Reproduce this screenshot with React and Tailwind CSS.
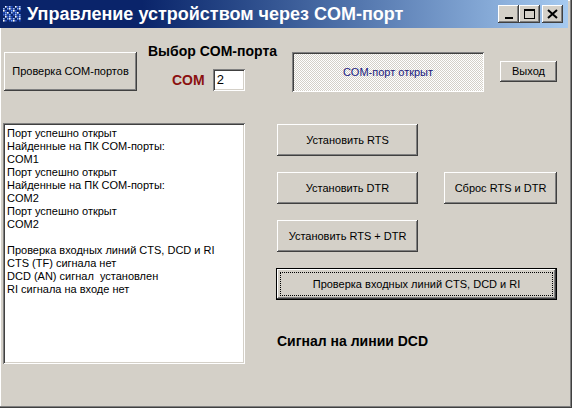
const btn =
  "flex items-center justify-center bg-[#d4d0c8] text-[11px] text-black shadow-[inset_-1px_-1px_#404040,inset_1px_1px_#ffffff,inset_-2px_-2px_#808080,inset_2px_2px_#d4d0c8]";

const lines = [
  "Порт успешно открыт",
  "Найденные на ПК COM-порты:",
  "COM1",
  "Порт успешно открыт",
  "Найденные на ПК COM-порты:",
  "COM2",
  "Порт успешно открыт",
  "COM2",
  "",
  "Проверка входных линий CTS, DCD и RI",
  "CTS (TF) сигнала нет",
  "DCD (AN) сигнал  установлен",
  "RI сигнала на входе нет",
];

function AppIcon() {
  const cells = [];
  const colors = ["#6fa0ff", "#ffffff", "#3a5fd0", "#9fc0ff", "#204cc0"];
  for (let r = 0; r < 8; r++) {
    for (let c = 0; c < 9; c++) {
      if ((r * 7 + c * 3) % 5 === 0) continue;
      cells.push(
        <rect key={r + "-" + c} x={c * 2} y={r * 2} width="1.6" height="1.6" fill={colors[(r * 3 + c) % 5]} />
      );
    }
  }
  return (
    <svg width="18" height="16" viewBox="0 0 18 16">
      {cells}
    </svg>
  );
}

function TitleBtn({ children, className = "" }) {
  return (
    <div
      className={
        "w-[21px] h-[18px] flex items-center justify-center bg-[#d4d0c8] shadow-[inset_-1px_-1px_#404040,inset_1px_1px_#ffffff,inset_-2px_-2px_#808080] " +
        className
      }
    >
      {children}
    </div>
  );
}

export default function App() {
  return (
    <div className="w-[572px] h-[408px] bg-[#d4d0c8] overflow-hidden font-['Liberation_Sans',Arial,sans-serif] shadow-[inset_-1px_-1px_#404040,inset_-2px_-2px_#808080,inset_1px_1px_#ffffff]">
      {/* Title bar */}
      <div className="h-[28px] w-[568px] bg-linear-to-r from-[#0a246a] via-[#0a246a] via-25% to-[#a6caf0] flex items-center">
        <div className="ml-[3px]">
          <AppIcon />
        </div>
        <div className="ml-[6px] text-white font-bold text-[18px] leading-[22px] whitespace-nowrap">
          Управление устройством через COM-порт
        </div>
        <div className="ml-auto mr-[5px] flex items-center">
          <TitleBtn>
            <div className="w-[8px] h-[2px] bg-black mt-[8px]" />
          </TitleBtn>
          <TitleBtn>
            <div className="w-[11px] h-[10px] border border-black border-t-2" />
          </TitleBtn>
          <TitleBtn className="ml-[2px]">
            <svg width="11" height="10" viewBox="0 0 11 10">
              <path d="M1 1 L10 9 M10 1 L1 9" stroke="#000" strokeWidth="2" />
            </svg>
          </TitleBtn>
        </div>
      </div>

      {/* Row 1 */}
      <div className="flex items-start pl-[4px] h-[68px]">
        <div className={btn + " mt-[24px] w-[133px] h-[39px]"}>Проверка COM-портов</div>
        <div className="ml-[11px] w-[137px] flex flex-col">
          <div className="mt-[15px] text-[14px] leading-[16px] font-bold text-black whitespace-nowrap">
            Выбор COM-порта
          </div>
          <div className="mt-[10px] flex items-center">
            <div className="ml-[24px] text-[14px] font-bold leading-[16px] text-[#8b1010]">COM</div>
            <div className="ml-[8px] w-[32px] h-[22px] bg-white flex items-center pl-[4px] text-[13px] text-black shadow-[inset_1px_1px_#808080,inset_-1px_-1px_#ffffff,inset_2px_2px_#404040,inset_-2px_-2px_#d4d0c8]">
              2
            </div>
          </div>
        </div>
        <div className="ml-[7px] mt-[24px] w-[192px] h-[40px] flex items-center justify-center text-[11px] text-[#1a1a80] bg-[repeating-conic-gradient(#ffffff_0_25%,#d4d0c8_0_50%)] bg-[length:2px_2px] shadow-[inset_1px_1px_#808080,inset_-1px_-1px_#ffffff,inset_2px_2px_#404040]">
          COM-порт открыт
        </div>
        <div className={btn + " ml-[16px] mt-[33px] w-[57px] h-[21px]"}>Выход</div>
      </div>

      {/* Row 2 */}
      <div className="flex items-start pl-[3px]">
        <div className="mt-[27px] w-[242px] h-[241px] bg-white pl-[4px] pt-[4px] text-[11px] leading-[13px] text-black shadow-[inset_1px_1px_#808080,inset_-1px_-1px_#ffffff,inset_2px_2px_#404040,inset_-2px_-2px_#d4d0c8]">
          {lines.map((l, i) => (
            <div key={i} className="h-[13px] whitespace-pre">
              {l}
            </div>
          ))}
        </div>
        <div className="ml-[31px] mt-[28px] flex flex-col">
          <div className={btn + " ml-[1px] w-[141px] h-[32px]"}>Установить RTS</div>
          <div className="mt-[16px] flex">
            <div className={btn + " ml-[1px] w-[141px] h-[32px]"}>Установить DTR</div>
            <div className={btn + " ml-[26px] w-[113px] h-[32px]"}>Сброс RTS и DTR</div>
          </div>
          <div className={btn + " mt-[16px] ml-[1px] w-[141px] h-[32px]"}>Установить RTS + DTR</div>
          <div className="mt-[16px] w-[281px] h-[32px] flex p-[4px] bg-[#d4d0c8] shadow-[inset_0_0_0_1px_#000000,inset_-2px_-2px_#404040,inset_2px_2px_#ffffff,inset_-3px_-3px_#808080]">
            <div className="flex-1 flex items-center justify-center border border-dotted border-black text-[11px] text-black">
              Проверка входных линий CTS, DCD и RI
            </div>
          </div>
          <div className="mt-[33px] ml-[1px] text-[14px] leading-[16px] font-bold text-black">
            Сигнал на линии DCD
          </div>
        </div>
      </div>
    </div>
  );
}
